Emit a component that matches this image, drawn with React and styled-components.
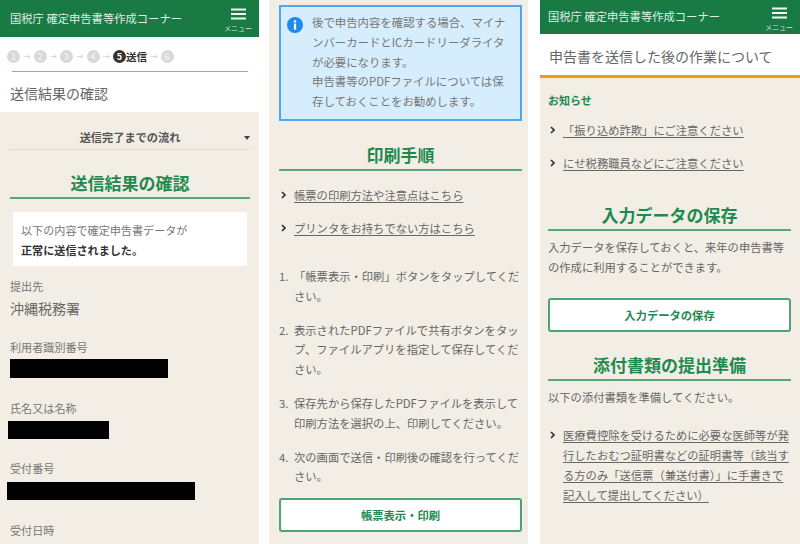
import React from 'react';
import styled, { createGlobalStyle } from 'styled-components';

const jp = '"Noto Sans CJK JP", "Noto Sans", sans-serif';

const Global = createGlobalStyle`
  html, body { margin: 0; padding: 0; background: #fff; }
  body { width: 800px; height: 544px; overflow: hidden; font-family: ${jp}; color: #555; }
  * { box-sizing: border-box; }
`;

const Page = styled.div`
  display: flex;
  width: 800px;
  height: 544px;
  overflow: hidden;
`;

const Phone = styled.div`
  flex: none;
  width: ${p => p.$w}px;
  height: 544px;
  margin-left: ${p => p.$ml || 0}px;
  background: #f2eee5;
  overflow: hidden;
`;

const Header = styled.div`
  display: flex;
  align-items: flex-start;
  justify-content: space-between;
  height: ${p => p.$h}px;
  padding: ${p => p.$top}px 6px 0 ${p => p.$left}px;
  background: #197a44;
  color: #dfeee5;
`;

const HeaderTitle = styled.div`
  margin-top: ${p => p.$top}px;
  font-size: 11.3px;
  line-height: 18px;
  white-space: nowrap;
`;

const MenuBtn = styled.div`
  display: flex;
  flex-direction: column;
  align-items: center;
  width: 30px;
  font-size: 7px;
  line-height: 8px;
  color: #cfe3d7;
  svg { display: block; margin-bottom: 4px; }
`;

const Steps = styled.div`
  display: flex;
  align-items: center;
  height: 34px;
  padding: 4px 0 0 7px;
  background: #fff;
  font-size: 10.5px;
  font-weight: 700;
  color: #333;
`;

const Step = styled.span`
  display: flex;
  align-items: center;
  justify-content: center;
  width: 13px;
  height: 13px;
  border-radius: 50%;
  background: ${p => (p.$on ? '#333' : '#d8d8d8')};
  color: ${p => (p.$on ? '#fff' : '#efefef')};
  font-size: 9px;
  font-weight: 700;
`;

const Arrow = styled.span`
  width: 13.5px;
  text-align: center;
  color: #c4c4c4;
  font-size: 7px;
  font-weight: 400;
`;

const TitleRule = styled.div`
  height: 1px;
  margin: 0 11px 0 12px;
  background: #7dbb98;
`;

const TitleWrap = styled.div`
  background: #fff;
`;

const PageTitle = styled.div`
  height: 40px;
  padding: 12px 10px 0;
  font-size: 14px;
  line-height: 18px;
  color: #666;
`;

const Flow = styled.div`
  position: relative;
  margin: 0 9px 0 10px;
  height: 38px;
  padding-top: 7px;
  border-bottom: 1px solid #dcd8cf;
  text-align: center;
  font-size: 11.2px;
  font-weight: 700;
  line-height: 36px;
  color: #555;
`;

const Caret = styled.span`
  position: absolute;
  right: 0;
  top: 24px;
  border: 3px solid transparent;
  border-top: 4px solid #444;
`;

const Heading = styled.div`
  margin: ${p => p.$m};
  height: 29px;
  border-bottom: 2px solid #5aa778;
  text-align: center;
  font-size: 17px;
  font-weight: 700;
  line-height: 26px;
  color: #1f8a50;
`;

const Notice = styled.div`
  margin: 13px 12px 0 13px;
  padding: 8px;
  height: 54px;
  background: #fff;
  font-size: 11.1px;
  line-height: 20px;
  color: #777;
  b { color: #333; }
`;

const Field = styled.div`
  margin: ${p => p.$m}px 0 0 10px;
  font-size: 11.1px;
  line-height: 16px;
  color: #777;
`;

const FieldValue = styled.div`
  margin: 4px 0 0 10px;
  font-size: 14px;
  line-height: 20px;
  color: #666;
`;

const Masked = styled.div`
  width: ${p => p.$w}px;
  height: ${p => p.$h}px;
  margin: ${p => p.$m}px 0 0 ${p => p.$l}px;
  background: #000;
`;

const InfoBox = styled.div`
  display: flex;
  gap: 9px;
  margin: 5px 0 0 10px;
  width: 243px;
  height: 116px;
  padding: 6px 12px 0 6px;
  border: 2px solid #4da6ee;
  background: #d5edfc;
  font-size: 11.4px;
  line-height: 19.8px;
  color: #777;
`;

const InfoIcon = styled.svg`
  flex: none;
  width: 16px;
  height: 16px;
  margin-top: 4px;
`;

const LinkRow = styled.div`
  display: flex;
  margin: ${p => p.$m};
  font-size: 11.3px;
  line-height: ${p => p.$lh || 22}px;
  color: #666;
  a {
    text-decoration: underline;
    text-underline-offset: 2px;
    color: #666;
  }
`;

const ChevronWrap = styled.span`
  flex: none;
  display: flex;
  align-items: center;
  width: 15px;
  height: 1lh;
  padding-left: 2px;
`;

const Steps2 = styled.div`
  display: flex;
  flex-direction: column;
  gap: 14px;
  margin: 28px 6px 0 10px;
  font-size: 11.3px;
  line-height: 19.8px;
  color: #666;
`;

const StepItem = styled.div`
  display: grid;
  grid-template-columns: 15px 1fr;
`;

const GreenBtn = styled.div`
  margin: ${p => p.$m};
  height: 34px;
  border: 2px solid #4fa274;
  border-radius: 3px;
  background: #fff;
  text-align: center;
  font-size: 11.3px;
  font-weight: 700;
  line-height: 30px;
  color: #1f8a50;
`;

const SectionTitle = styled.div`
  height: 41px;
  padding: 11px 9px 0;
  background: #fff;
  font-size: 14px;
  line-height: 22px;
  color: #666;
`;

const OrangeRule = styled.div`
  height: 3px;
  background: #f39a12;
`;

const Oshirase = styled.div`
  margin: 14px 0 0 8px;
  font-size: 11px;
  font-weight: 700;
  line-height: 16px;
  color: #1f8a50;
`;

const Para = styled.div`
  margin: 6px 9px 0 8px;
  font-size: 11.3px;
  line-height: 20px;
  color: #666;
`;

const Menu = () => (
  <MenuBtn>
    <svg width="15" height="12" viewBox="0 0 15 12">
      <path d="M0 1.5h15M0 6h15M0 10.5h15" stroke="#eef6f1" strokeWidth="1.8" />
    </svg>
    メニュー
  </MenuBtn>
);

const Chevron = () => (
  <ChevronWrap>
    <svg width="6" height="8" viewBox="0 0 6 8">
      <path d="M1 1l3 3-3 3" fill="none" stroke="#333" strokeWidth="1.7" />
    </svg>
  </ChevronWrap>
);

const printSteps = [
  '「帳票表示・印刷」ボタンをタップしてください。',
  '表示されたPDFファイルで共有ボタンをタップ、ファイルアプリを指定して保存してください。',
  '保存先から保存したPDFファイルを表示して印刷方法を選択の上、印刷してください。',
  '次の画面で送信・印刷後の確認を行ってください。',
];

export default function App() {
  return (
    <Page>
      <Global />
      <Phone $w={259}>
        <Header $h={37} $top={8} $left={10}>
          <HeaderTitle $top={1}>国税庁 確定申告書等作成コーナー</HeaderTitle>
          <Menu />
        </Header>
        <TitleWrap>
          <Steps>
            {[1, 2, 3, 4].map(n => (
              <React.Fragment key={n}>
                <Step>{n}</Step>
                <Arrow>→</Arrow>
              </React.Fragment>
            ))}
            <Step $on>5</Step>
            <span>送信</span>
            <Arrow>→</Arrow>
            <Step>6</Step>
          </Steps>
          <TitleRule />
          <PageTitle>送信結果の確認</PageTitle>
        </TitleWrap>
        <Flow>
          送信完了までの流れ
          <Caret />
        </Flow>
        <Heading $m="20px 9px 0 10px">送信結果の確認</Heading>
        <Notice>
          以下の内容で確定申告書データが
          <br />
          <b>正常に送信されました。</b>
        </Notice>
        <Field $m={12}>提出先</Field>
        <FieldValue>沖縄税務署</FieldValue>
        <Field $m={21}>利用者識別番号</Field>
        <Masked $w={158} $h={19} $l={10} $m={4} />
        <Field $m={22}>氏名又は名称</Field>
        <Masked $w={101} $h={18} $l={8} $m={5} />
        <Field $m={21}>受付番号</Field>
        <Masked $w={188} $h={18} $l={7} $m={6} />
        <Field $m={22}>受付日時</Field>
      </Phone>

      <Phone $w={259} $ml={10}>
        <InfoBox>
          <InfoIcon viewBox="0 0 17 17">
            <circle cx="8.5" cy="8.5" r="8.5" fill="#1a8cee" />
            <rect x="7.3" y="7" width="2.4" height="6.5" fill="#fff" />
            <rect x="7.3" y="3.5" width="2.4" height="2.3" fill="#fff" />
          </InfoIcon>
          <div>
            後で申告内容を確認する場合、マイナンバーカードとICカードリーダライタが必要になります。
            <br />
            申告書等のPDFファイルについては保存しておくことをお勧めします。
          </div>
        </InfoBox>
        <Heading $m="21px 6px 0 10px">印刷手順</Heading>
        <LinkRow $m="13px 0 0 10px">
          <Chevron />
          <a>帳票の印刷方法や注意点はこちら</a>
        </LinkRow>
        <LinkRow $m="11px 0 0 10px">
          <Chevron />
          <a>プリンタをお持ちでない方はこちら</a>
        </LinkRow>
        <Steps2>
          {printSteps.map((text, i) => (
            <StepItem key={i}>
              <span>{i + 1}.</span>
              <span>{text}</span>
            </StepItem>
          ))}
        </Steps2>
        <GreenBtn $m="11px 6px 0 10px">帳票表示・印刷</GreenBtn>
      </Phone>

      <Phone $w={260} $ml={12}>
        <Header $h={34} $top={7} $left={8}>
          <HeaderTitle $top={0}>国税庁 確定申告書等作成コーナー</HeaderTitle>
          <Menu />
        </Header>
        <SectionTitle>申告書を送信した後の作業について</SectionTitle>
        <OrangeRule />
        <Oshirase>お知らせ</Oshirase>
        <LinkRow $m="11px 0 0 8px">
          <Chevron />
          <a>「振り込め詐欺」にご注意ください</a>
        </LinkRow>
        <LinkRow $m="11px 0 0 8px">
          <Chevron />
          <a>にせ税務職員などにご注意ください</a>
        </LinkRow>
        <Heading $m="28px 9px 0 8px">入力データの保存</Heading>
        <Para>入力データを保存しておくと、来年の申告書等の作成に利用することができます。</Para>
        <GreenBtn $m="21px 9px 0 8px">入力データの保存</GreenBtn>
        <Heading $m="20px 9px 0 8px">添付書類の提出準備</Heading>
        <Para>以下の添付書類を準備してください。</Para>
        <LinkRow $m="18px 9px 0 8px" $lh={20}>
          <Chevron />
          <a>医療費控除を受けるために必要な医師等が発行したおむつ証明書などの証明書等（該当する方のみ「送信票（兼送付書）」に手書きで記入して提出してください）</a>
        </LinkRow>
      </Phone>
    </Page>
  );
}
